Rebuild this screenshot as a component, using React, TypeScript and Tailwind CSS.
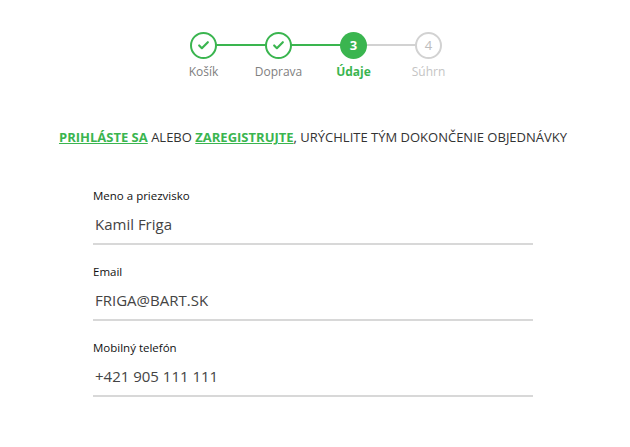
import { Check } from 'lucide-react'

const steps = [
  { label: 'Košík', state: 'done' },
  { label: 'Doprava', state: 'done' },
  { label: 'Údaje', state: 'active' },
  { label: 'Súhrn', state: 'todo' },
]

const fields = [
  { label: 'Meno a priezvisko', value: 'Kamil Friga' },
  { label: 'Email', value: 'FRIGA@BART.SK' },
  { label: 'Mobilný telefón', value: '+421 905 111 111' },
]

const Step = ({ label, state, index }: { label: string; state: string; index: number }) => (
  <div className="relative flex w-[75px] flex-col items-center">
    {index < 3 && (
      <div
        className={
          index < 2
            ? 'absolute left-[37px] top-[12px] h-[2px] w-[75px] bg-[#3ab54f]'
            : 'absolute left-[37px] top-[12px] h-[2px] w-[75px] bg-[#d2d2d2]'
        }
      />
    )}
    {state === 'done' && (
      <div className="relative flex h-[27px] w-[27px] items-center justify-center rounded-full border-2 border-[#3ab54f] bg-white">
        <Check size={13} strokeWidth={4} className="text-[#3ab54f]" />
      </div>
    )}
    {state === 'active' && (
      <div className="relative flex h-[27px] w-[27px] items-center justify-center rounded-full bg-[#3ab54f] text-[13px] font-bold text-white">
        {index + 1}
      </div>
    )}
    {state === 'todo' && (
      <div className="relative flex h-[27px] w-[27px] items-center justify-center rounded-full border-2 border-[#d2d2d2] bg-white text-[13px] text-[#bdbdbd]">
        {index + 1}
      </div>
    )}
    <span
      className={
        state === 'active'
          ? 'mt-[3px] text-[12px] leading-[20px] font-bold text-[#3ab54f]'
          : state === 'todo'
            ? 'mt-[3px] text-[12px] leading-[20px] text-[#c4c4c4]'
            : 'mt-[3px] text-[12px] leading-[20px] text-[#808080]'
      }
    >
      {label}
    </span>
  </div>
)

export default function App() {
  return (
    <div className="flex h-[447px] w-[626px] flex-col items-center overflow-hidden bg-white pt-[32px] font-['Open_Sans',sans-serif]">
      <div className="ml-[6px] flex">
        {steps.map((s, i) => (
          <Step key={s.label} label={s.label} state={s.state} index={i} />
        ))}
      </div>

      <p className="mt-[45px] text-[13px] leading-[20px] whitespace-nowrap text-[#333]">
        <a className="font-bold text-[#3ab54f] underline">PRIHLÁSTE SA</a> ALEBO{' '}
        <a className="font-bold text-[#3ab54f] underline">ZAREGISTRUJTE</a>, URÝCHLITE TÝM DOKONČENIE OBJEDNÁVKY
      </p>

      <div className="mt-[41px] flex w-[440px] flex-col gap-[19px]">
        {fields.map((f) => (
          <div key={f.label} className="flex flex-col">
            <label className="text-[11.5px] leading-[16px] text-[#111]">{f.label}</label>
            <div className="flex h-[41px] items-center border-b-2 border-[#d8d8d8] px-[2px] pt-[2px] text-[15px] text-[#444]">
              {f.value}
            </div>
          </div>
        ))}
      </div>
    </div>
  )
}
